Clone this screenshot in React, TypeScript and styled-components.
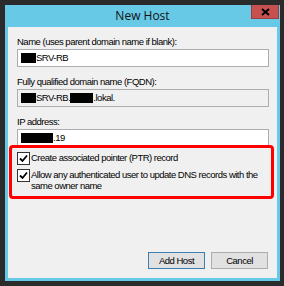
import styled, { createGlobalStyle } from "styled-components";

const GlobalStyle = createGlobalStyle`
  html, body {
    margin: 0;
    padding: 0;
    background: #2b2b2b;
  }
  body {
    width: 284px;
    height: 286px;
    overflow: hidden;
    font-family: "Liberation Sans", Arial, sans-serif;
  }
`;

const Screen = styled.div`
  width: 284px;
  height: 286px;
  box-sizing: border-box;
  padding: 5px 4px 5px 5px;
`;

const Window = styled.div`
  width: 275px;
  height: 276px;
  background: #67c9e6;
  display: flex;
  flex-direction: column;
`;

const TitleBar = styled.div`
  height: 22px;
  display: grid;
  grid-template-columns: 1fr auto 1fr;
  align-items: start;
  flex-shrink: 0;
`;

const Title = styled.div`
  grid-column: 2;
  padding-top: 4px;
  font-family: "Segoe UI", "Open Sans", "Noto Sans", sans-serif;
  font-size: 12px;
  line-height: 14px;
  color: #111;
`;

const CloseButton = styled.div`
  grid-column: 3;
  justify-self: end;
  margin-right: 1px;
  width: 28px;
  height: 14px;
  background: #c75050;
  border: 1px solid #9b3f3f;
  border-top: none;
  box-sizing: border-box;
  display: flex;
  align-items: center;
  justify-content: center;
`;

const Client = styled.div`
  flex: 1;
  margin: 0 3px 3px;
  background: #f0f0f0;
  padding: 9px 8px 9px 9px;
  display: flex;
  flex-direction: column;
  font-size: 9.5px;
  letter-spacing: -0.5px;
  white-space: nowrap;
  color: #000;
`;

const Label = styled.div`
  line-height: 12px;
  height: 12px;
  margin-bottom: 1px;
`;

const Field = styled.div<{ $readOnly?: boolean }>`
  height: 18px;
  box-sizing: border-box;
  border: 1px solid ${p => (p.$readOnly ? "#adadad" : "#abadb3")};
  background: ${p => (p.$readOnly ? "#f0f0f0" : "#fff")};
  display: flex;
  align-items: center;
  padding-left: 3px;
  line-height: 12px;
  margin-bottom: 9px;
`;

const Redact = styled.span<{ $w: number }>`
  display: inline-block;
  width: ${p => p.$w}px;
  height: 10px;
  background: #000;
`;

const CheckGroup = styled.div`
  margin: -11px -5px 0 -8px;
  border: 3px solid #f00;
  border-radius: 4px;
  padding: 4px 4px 5px 5px;
  display: flex;
  flex-direction: column;
  gap: 4px;
`;

const CheckRow = styled.div`
  display: flex;
  align-items: flex-start;
  gap: 1px;
  line-height: 11px;
`;

const Box = styled.div`
  width: 11px;
  height: 11px;
  flex-shrink: 0;
  border: 1px solid #333;
  background: #fff;
  display: flex;
  align-items: center;
  justify-content: center;
`;

const Buttons = styled.div`
  margin-top: auto;
  display: flex;
  justify-content: flex-end;
  gap: 6px;
  padding-right: 1px;
`;

const Button = styled.div<{ $default?: boolean }>`
  width: 57px;
  height: 17px;
  box-sizing: border-box;
  border: 1px solid ${p => (p.$default ? "#3c7fb1" : "#adadad")};
  background: #e1e1e1;
  display: flex;
  align-items: center;
  justify-content: center;
  line-height: 12px;
`;

const Check = () => (
  <Box>
    <svg width="9" height="9" viewBox="0 0 9 9">
      <path d="M1 4.5 L3.5 7 L8 1.5" fill="none" stroke="#000" strokeWidth="1.8" />
    </svg>
  </Box>
);

export default function App() {
  return (
    <>
      <GlobalStyle />
      <Screen>
        <Window>
          <TitleBar>
            <Title>New Host</Title>
            <CloseButton>
              <svg width="9" height="8" viewBox="0 0 9 8">
                <path d="M1 1 L8 7 M8 1 L1 7" stroke="#000" strokeWidth="2" />
              </svg>
            </CloseButton>
          </TitleBar>
          <Client>
            <Label>Name (uses parent domain name if blank):</Label>
            <Field>
              <Redact $w={15} />SRV-RB
            </Field>
            <Label>Fully qualified domain name (FQDN):</Label>
            <Field $readOnly>
              <Redact $w={15} />SRV-RB.<Redact $w={23} />.lokal.
            </Field>
            <Label>IP address:</Label>
            <Field>
              <Redact $w={32} />.19
            </Field>
            <CheckGroup>
              <CheckRow>
                <Check />
                <span>Create associated pointer (PTR) record</span>
              </CheckRow>
              <CheckRow>
                <Check />
                <span>
                  Allow any authenticated user to update DNS records with the
                  <br />
                  same owner name
                </span>
              </CheckRow>
            </CheckGroup>
            <Buttons>
              <Button $default>Add Host</Button>
              <Button>Cancel</Button>
            </Buttons>
          </Client>
        </Window>
      </Screen>
    </>
  );
}
